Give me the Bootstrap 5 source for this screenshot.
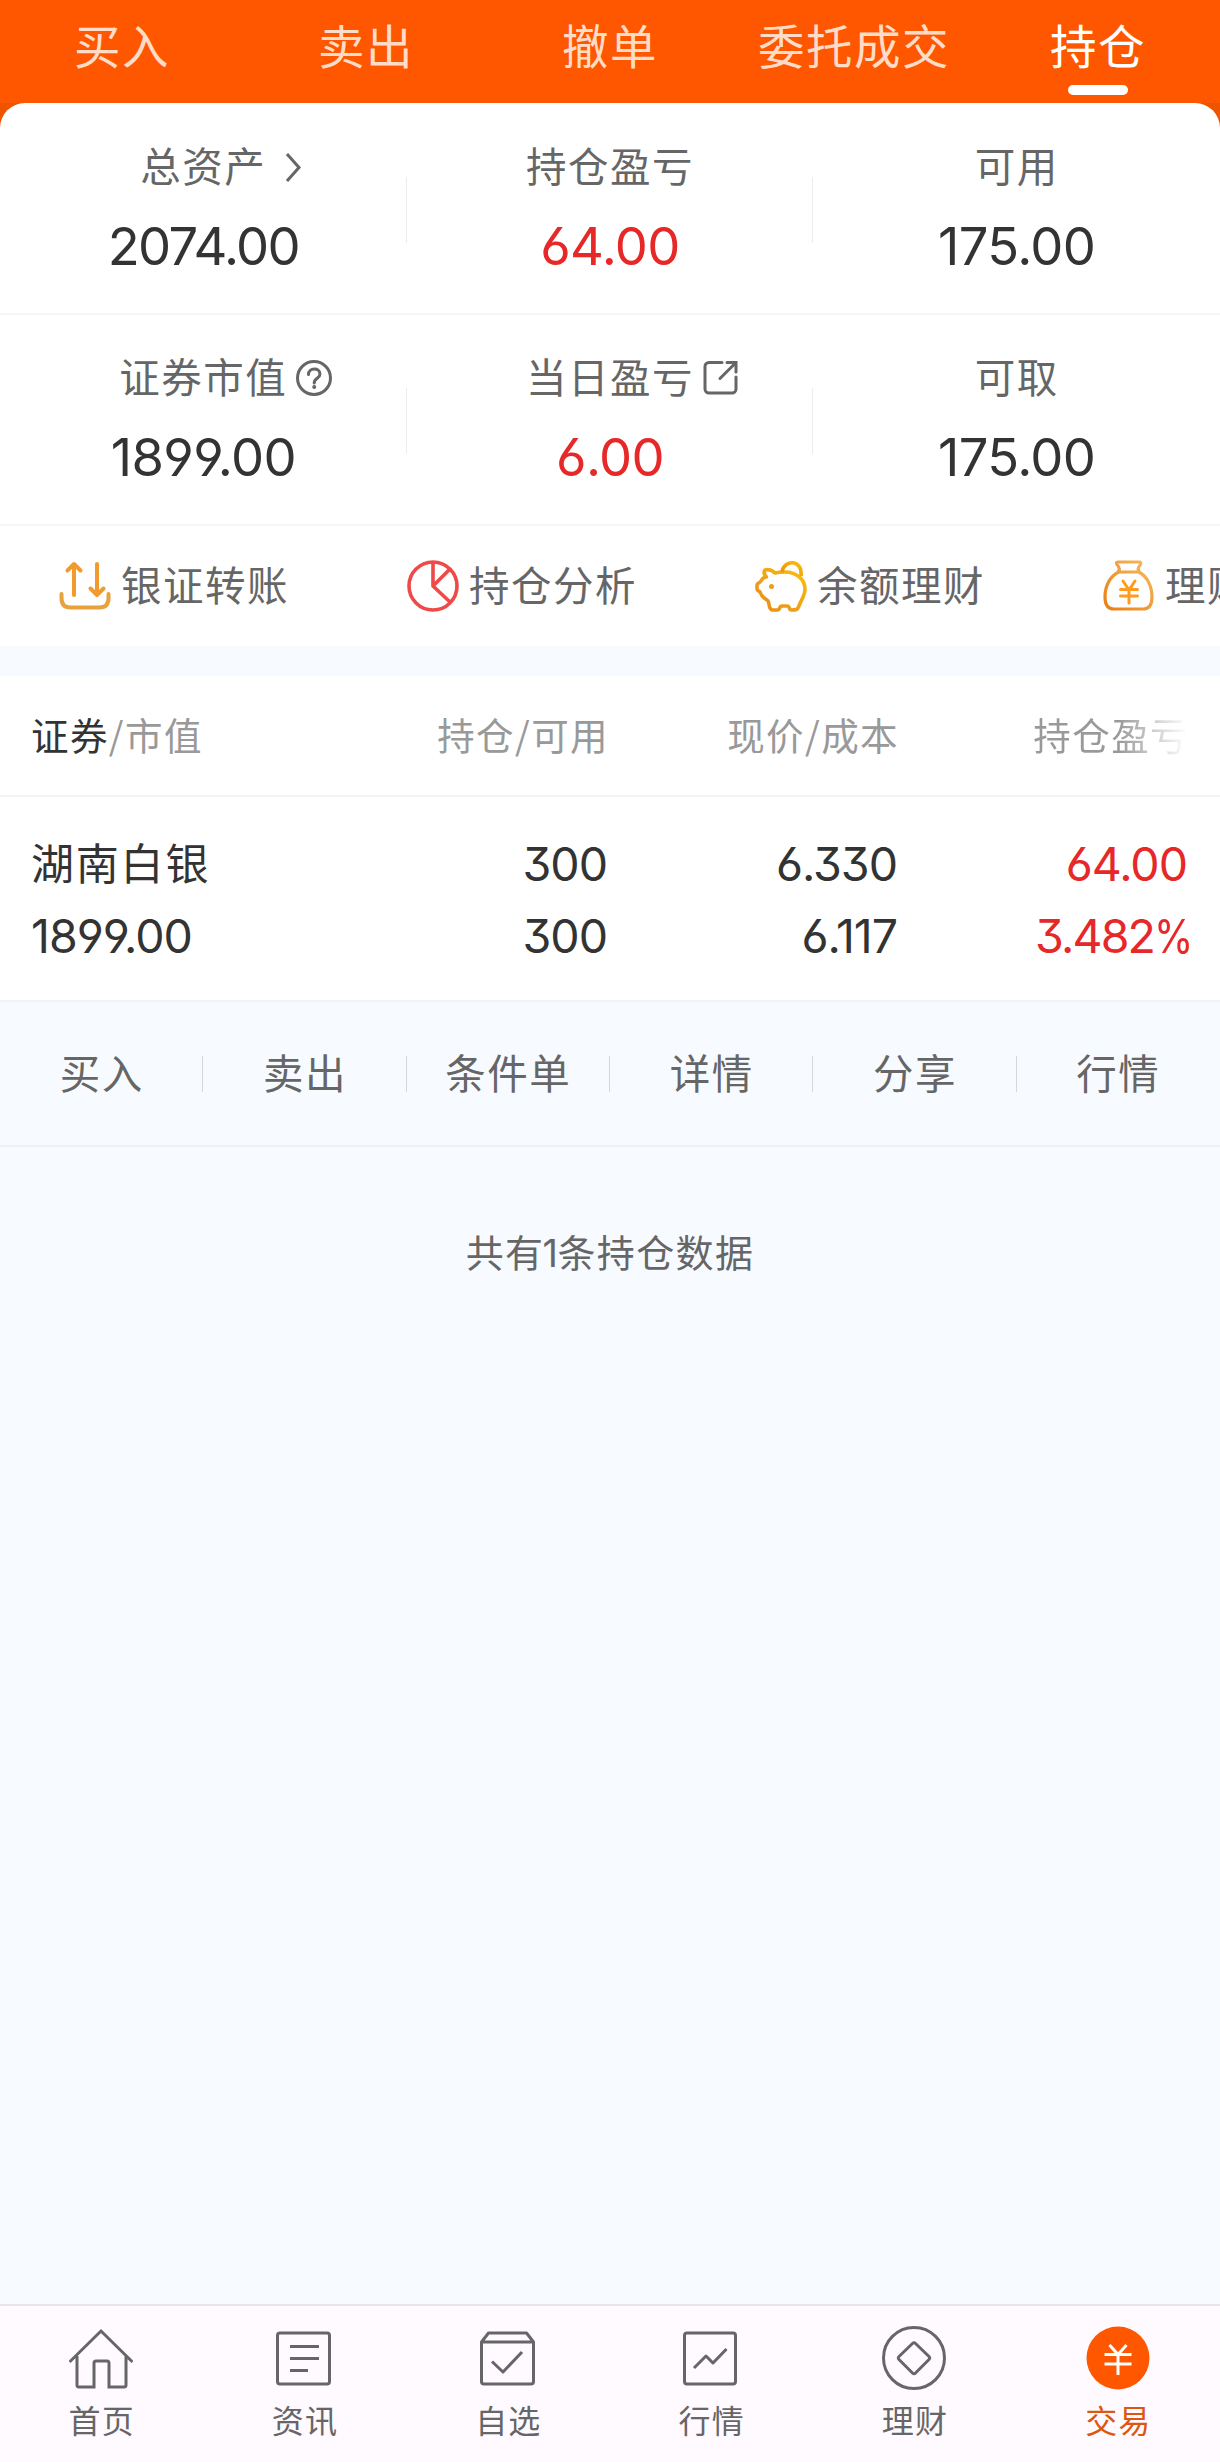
<!DOCTYPE html>
<html lang="zh-CN">
<head>
<meta charset="utf-8">
<meta name="viewport" content="width=device-width, initial-scale=1">
<title>持仓</title>
<link href="https://cdn.jsdelivr.net/npm/bootstrap@5.3.0/dist/css/bootstrap.min.css" rel="stylesheet">
<style>
body{font-family:"Noto Sans CJK SC",sans-serif;background:#f7fbff;color:#333;overflow:hidden}
.screen{width:1220px;height:2462px;overflow:hidden}
svg{fill:none;flex:none;display:block}
.trade-tabs{height:103px;background:#ff5700;padding-top:13px}
.trade-tabs .nav-link{width:244px;padding:0;color:#ffdcc8;font-size:46.5px;line-height:62px;letter-spacing:.032em;position:relative}
.trade-tabs .nav-link.active{color:#fff}
.trade-tabs .nav-link.active::after{content:"";position:absolute;left:92px;top:72px;width:60px;height:10px;border-radius:5px;background:#fff}
.corner-back{background:#ee5400}
.summary{background:#fff;border-radius:25px 25px 0 0;padding-top:1px}
.stat-row{height:211px;border-bottom:2px solid #f6f6f6}
.stat{padding-top:35px}
.stat+.stat::before{content:"";position:absolute;left:-1px;top:73px;width:1px;height:66px;background:#ececec}
.stat-name{font-size:40.5px;line-height:52px;color:#666;letter-spacing:.037em;width:max-content}
.stat-name svg{position:absolute;left:100%;top:50%}
.num{font-family:Inter,"Noto Sans CJK SC",sans-serif;font-weight:400;font-feature-settings:"cv09","cv03","cv04";letter-spacing:-.012em}
.stat .num{font-size:52.5px;line-height:60px;margin-top:25px}
.num-tight{letter-spacing:-.032em!important}
.pct{display:inline-block;transform:scaleX(.86);transform-origin:left;margin-right:-.17em}
.up{color:#e62828}
.quick{height:120px;background:#fff;overflow:hidden}
.quick-item{width:348px;padding-left:59px;font-size:40.5px;line-height:52px;color:#666;letter-spacing:.037em;gap:10px;flex:none}
.quick-item span{margin-top:-4px;white-space:nowrap}
.holdings{margin-top:30px;background:#fff}
.cells{padding:0 33px 0 31px}
.cells>div:nth-child(1){width:286px}
.cells>div:nth-child(2){width:290px}
.cells>div:nth-child(3){width:290px}
.cells>div:nth-child(4){width:290px}
.cells-head{height:121px;border-bottom:2px solid #f4f4f4;font-size:37.5px;color:#999;letter-spacing:.038em;line-height:52px;padding-bottom:4px}
.cells-head .text-end>span{margin-right:-2px}
.fade-out{background:linear-gradient(90deg,#999 0,#999 55%,#f2eef0 92%,#fff 100%);-webkit-background-clip:text;background-clip:text;color:transparent}
.cells-body{height:205px;border-bottom:2px solid #f0f3f5;padding-top:31px}
.cells-body .num{font-size:46.5px;line-height:72px;height:72px;white-space:nowrap;letter-spacing:-.022em}
.cells-body .rate{letter-spacing:-.04em;margin-right:-3px}
.stock{font-size:43px;line-height:66px;height:72px;letter-spacing:.042em}
.acts{height:145px;border-bottom:2px solid #eef2f4;font-size:40.5px;color:#666;letter-spacing:.037em}
.act{line-height:52px;position:relative}
.act span{display:block;margin-top:-4px}
.act+.act::before{content:"";position:absolute;left:-1px;top:6px;width:1px;height:36px;background:#d4d8dc}
.total{margin-top:78px;font-size:38px;line-height:52px;color:#666;letter-spacing:.036em}
.total .num{font-size:38px;margin-left:-2px}
.tabbar{height:158px;background:#fefaff;border-top:2px solid #e6e6e8;padding-top:20px}
.tabbar a{color:#666;font-size:32px;line-height:40px;letter-spacing:.035em}
.tabbar svg{margin-left:-1px}
.tabbar span{margin-top:9px}
.tabbar a.on{color:#dd570f}
</style>
</head>
<body>
<div class="screen d-flex flex-column">
  <nav class="nav trade-tabs flex-nowrap text-center">
    <a class="nav-link">买入</a><a class="nav-link">卖出</a><a class="nav-link">撤单</a><a class="nav-link">委托成交</a><a class="nav-link active">持仓</a>
  </nav>
  <div class="corner-back">
  <section class="summary">
    <div class="row g-0 stat-row">
      <div class="col stat position-relative d-flex flex-column align-items-center">
        <div class="stat-name position-relative">总资产<svg width="60" height="40" viewBox="0 0 60 40" style="margin-top:-17px"><path d="M21 6l12 13.500-12 13.500" stroke="#666" stroke-width="3"/></svg></div>
        <div class="num num-tight">2074.00</div>
      </div>
      <div class="col stat position-relative d-flex flex-column align-items-center"><div class="stat-name">持仓盈亏</div><div class="num up">64.00</div></div>
      <div class="col stat position-relative d-flex flex-column align-items-center"><div class="stat-name">可用</div><div class="num">175.00</div></div>
    </div>
    <div class="row g-0 stat-row">
      <div class="col stat position-relative d-flex flex-column align-items-center">
        <div class="stat-name position-relative">证券市值<svg width="50" height="40" viewBox="0 0 50 40" style="margin-top:-18px"><g stroke="#666" stroke-width="3"><circle cx="27" cy="20" r="16.500"/><path d="M21.500 16.500c0-7 11.500-7.500 11.500-.5 0 4.500-5.800 4-5.800 9" stroke-linecap="round"/></g><circle cx="27.200" cy="29" r="2" fill="#666"/></svg></div>
        <div class="num">1899.00</div>
      </div>
      <div class="col stat position-relative d-flex flex-column align-items-center">
        <div class="stat-name position-relative">当日盈亏<svg width="50" height="40" viewBox="0 0 50 40" style="margin-top:-18px"><path d="M28 4.500H15a4 4 0 0 0-4 4v22.500a4 4 0 0 0 4 4h23a4 4 0 0 0 4-4V19M33 4.500h9V14M42 4.500L26 20.500" stroke="#666" stroke-width="3" stroke-linecap="round"/></svg></div>
        <div class="num up">6.00</div>
      </div>
      <div class="col stat position-relative d-flex flex-column align-items-center"><div class="stat-name">可取</div><div class="num">175.00</div></div>
    </div>
    <div class="quick d-flex align-items-center">
      <div class="quick-item d-flex align-items-center">
        <svg width="52" height="52" viewBox="0 0 52 52" stroke-width="4" stroke-linecap="round" stroke-linejoin="round"><path d="M15 35V4M8.500 10.500L15 4l6.500 6.500M38 4v31M31.500 28.500L38 35l6.500-6.500" stroke="#f39a2c"/><path d="M2.500 34v4q0 9.500 9 9.500h29q9 0 9-9.500v-4" stroke="#e9a13c"/></svg>
        <span>银证转账</span>
      </div>
      <div class="quick-item d-flex align-items-center">
        <svg width="52" height="52" viewBox="0 0 52 52" stroke="#ee4a4a" stroke-width="3.600"><circle cx="26" cy="26" r="24"/><path d="M26 2v24l17 16M26 26L42.500 9.500"/></svg>
        <span>持仓分析</span>
      </div>
      <div class="quick-item d-flex align-items-center">
        <svg width="52" height="52" viewBox="0 0 52 52"><defs><linearGradient id="pig" x1="0" y1="1" x2="1" y2="0"><stop stop-color="#e88a1c"/><stop offset="1" stop-color="#fabe0b"/></linearGradient></defs><g stroke="url(#pig)" stroke-width="3.600" stroke-linejoin="round"><path d="M11.500 17c-3-3-3-5-1.500-7 4-1 7 0 10 3 4-1 7-1 10-1 12 0 20 8 20 17 0 7-4 11-6 17-1.500 4-3 4-8 4-2 0-1-4-4-4h-5c-3 0-2 4-4 4h-5c-5 0-3-6-5-9-3-3-6-3-8-9-1-1-3-1-3-3v-4c0-2 3-2 4-4 1-2 3-4 5.500-4z"/><path d="M27 12c2-13 21-13 19 4"/></g><circle cx="16.500" cy="26.500" r="2.500" fill="#ef9c17"/></svg>
        <span>余额理财</span>
      </div>
      <div class="quick-item d-flex align-items-center">
        <svg width="52" height="52" viewBox="0 0 52 52"><defs><linearGradient id="bag" x1="0" y1="1" x2="1" y2="0"><stop stop-color="#e87f16"/><stop offset="1" stop-color="#f6bb60"/></linearGradient></defs><g stroke="url(#bag)" stroke-width="3.200" stroke-linejoin="round"><path d="M15 2h21q2.500 0 1.500 2.500-4 4.500-1 7.500H15q3-3-1-7.500Q12.500 2 15 2zM16 12C7 16 2 26 2 37q0 12 9 12h29q9 0 9-12c0-11-5-21-13.500-25"/></g><path d="M20 21l6 9 6-9M26 30v13M17.500 29.500h17M17.500 36h17" stroke="#ff9c20" stroke-width="3" stroke-linecap="round"/></svg>
        <span>理财</span>
      </div>
    </div>
  </section>
  </div>
  <section class="holdings">
    <div class="cells cells-head d-flex align-items-center">
      <div><span style="color:#333">证券</span>/市值</div>
      <div class="text-end"><span>持仓/可用</span></div>
      <div class="text-end"><span>现价/成本</span></div>
      <div class="text-end"><span class="fade-out">持仓盈亏</span></div>
    </div>
    <div class="cells cells-body d-flex">
      <div><div class="stock">湖南白银</div><div class="num">1899.00</div></div>
      <div class="text-end"><div class="num">300</div><div class="num">300</div></div>
      <div class="text-end"><div class="num">6.330</div><div class="num">6.117</div></div>
      <div class="text-end up"><div class="num">64.00</div><div class="num rate">3.482<span class="pct">%</span></div></div>
    </div>
  </section>
  <div class="acts row g-0 align-items-center text-center">
    <div class="col act"><span>买入</span></div><div class="col act"><span>卖出</span></div><div class="col act"><span>条件单</span></div><div class="col act"><span>详情</span></div><div class="col act"><span>分享</span></div><div class="col act"><span>行情</span></div>
  </div>
  <div class="total text-center">共有<span class="num">1</span>条持仓数据</div>
  <nav class="tabbar row g-0 mt-auto text-center">
    <a class="col d-flex flex-column align-items-center text-decoration-none"><svg width="64" height="64" viewBox="0 0 64 64" stroke="#666" stroke-width="3"><path d="M0.500 36L32 5l31.500 31M8 30v29q0 2 2 2h15V37q0-2 2-2h11q2 0 2 2v24h15q2 0 2-2V30"/></svg><span>首页</span></a>
    <a class="col d-flex flex-column align-items-center text-decoration-none"><svg width="64" height="64" viewBox="0 0 64 64" stroke="#666" stroke-width="3"><rect x="5.500" y="7" width="52" height="51" rx="2.500"/><path d="M18 20.500h29M18 32.500h29M18 44.500h18"/></svg><span>资讯</span></a>
    <a class="col d-flex flex-column align-items-center text-decoration-none"><svg width="64" height="64" viewBox="0 0 64 64" stroke="#666" stroke-width="3" stroke-linejoin="round"><path d="M5.500 16l7-9h38l7 9v39.500q0 2.500-2.500 2.500H8q-2.500 0-2.500-2.500zM5.500 16h52"/><path d="M16 35.500l11 10.500 19-20"/></svg><span>自选</span></a>
    <a class="col d-flex flex-column align-items-center text-decoration-none"><svg width="64" height="64" viewBox="0 0 64 64" stroke="#666" stroke-width="3"><rect x="5.500" y="7" width="51" height="51" rx="2.500"/><path d="M15 42l12-12 7 7 13.500-14" stroke-linejoin="round"/></svg><span>行情</span></a>
    <a class="col d-flex flex-column align-items-center text-decoration-none"><svg width="64" height="64" viewBox="0 0 64 64" stroke="#666" stroke-width="3"><circle cx="32" cy="32" r="30.500"/><path d="M30.500 17.500L17 30.500q-1.500 1.500 0 3L30.500 47q1.500 1.500 3 0L47 33.500q1.500-1.500 0-3L33.500 17.500q-1.500-1.500-3 0z"/></svg><span>理财</span></a>
    <a class="col d-flex flex-column align-items-center text-decoration-none on"><svg width="64" height="64" viewBox="0 0 64 64"><circle cx="32" cy="32" r="31.500" fill="#ff5700"/><path d="M23.500 19l8.500 9.500L40.500 19M32 28.500V49M18.500 28.500h27M18.500 38h27" stroke="#fff" stroke-width="3"/></svg><span>交易</span></a>
  </nav>
</div>
<script src="https://cdn.jsdelivr.net/npm/bootstrap@5.3.0/dist/js/bootstrap.bundle.min.js"></script>
</body>
</html>
